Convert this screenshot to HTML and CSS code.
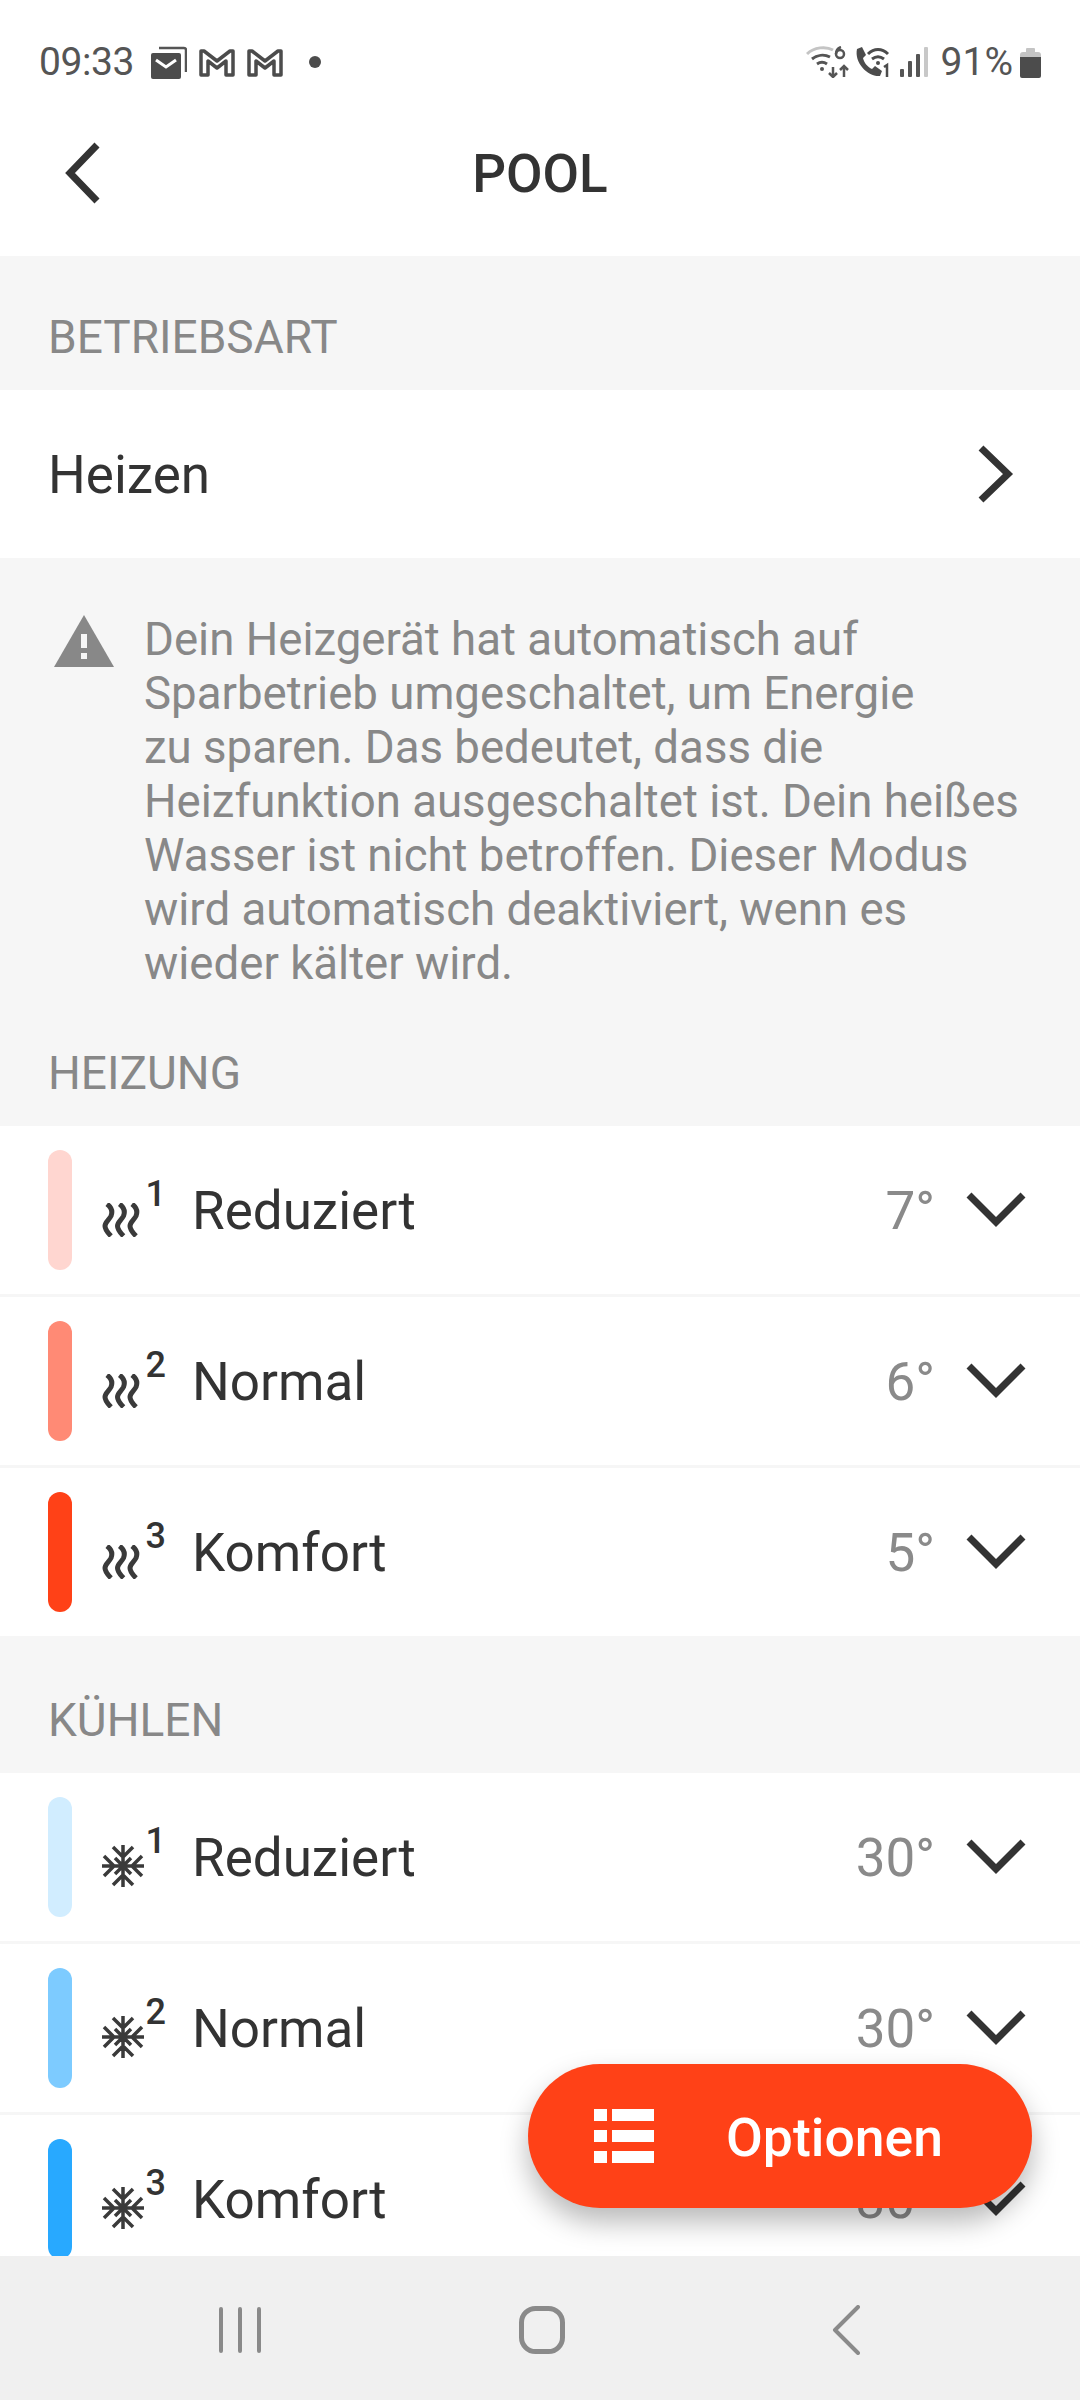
FILE: index.html
```html
<!DOCTYPE html>
<html lang="de">

<head>
    <meta charset="UTF-8">
    <meta name="viewport" content="width=device-width, initial-scale=1.0">
    <title>Pool</title>
    <link rel="stylesheet" href="styles.css">
</head>

<body>
    <div class="app">

        <!-- Statusleiste -->
        <div class="status">
            <div class="status-group">
                <span class="time">09:33</span>
                <svg class="mail-icon" width="36" height="33" viewBox="0 0 36 33">
                    <path d="M8 2h25a2 2 0 0 1 2 2v22" fill="none" stroke="#555" stroke-width="2.5" />
                    <rect x="0" y="7" width="30" height="26" rx="2" fill="#4c4c4c" />
                    <path d="M5 14l10 7 10-7" fill="none" stroke="#fff" stroke-width="3" />
                </svg>
                <svg class="gmail-icon" width="36" height="29" viewBox="0 0 36 29">
                    <path d="M2 27V3h3l13 10L31 3h3v24h-7V13l-9 7-9-7v14z" fill="#fff" stroke="#4c4c4c" stroke-width="3.5" stroke-linejoin="round" />
                </svg>
                <svg class="gmail-icon" width="36" height="29" viewBox="0 0 36 29">
                    <path d="M2 27V3h3l13 10L31 3h3v24h-7V13l-9 7-9-7v14z" fill="#fff" stroke="#4c4c4c" stroke-width="3.5" stroke-linejoin="round" />
                </svg>
                <span class="status-dot"></span>
            </div>
            <div class="status-group">
                <svg width="44" height="32" viewBox="0 0 44 32">
                    <path d="M1 8C8 1 20 0 27 4" fill="none" stroke="#c4c4c4" stroke-width="3" />
                    <path d="M6 13c5-4 12-5 18-2" fill="none" stroke="#555" stroke-width="3" />
                    <path d="M11 18c3-2 7-2 10 0" fill="none" stroke="#555" stroke-width="3" />
                    <circle cx="16" cy="23" r="2" fill="#555" />
                    <path d="M27 21v10m-4-4l4 4 4-4M38 31V20m-4 4l4-4 4 4" fill="none" stroke="#555" stroke-width="2.5" />
                    <circle cx="34" cy="8" r="4" fill="none" stroke="#555" stroke-width="2.5" />
                    <path d="M30 8c0-4 2-6 5-7" fill="none" stroke="#555" stroke-width="2.5" />
                </svg>
                <svg class="call-icon" width="36" height="32" viewBox="0 0 36 32">
                    <path d="M3 3l5-2 4 8-3 3c1 5 5 9 9 11l3-3 7 5-2 5C14 31 0 17 3 3z" fill="#4c4c4c" />
                    <path d="M14 8c6-6 14-6 20 0M18 13c4-3 8-3 12 0" fill="none" stroke="#4c4c4c" stroke-width="3" />
                    <circle cx="24" cy="17" r="2" fill="#4c4c4c" />
                    <path d="M30 21l3-2v12" fill="none" stroke="#4c4c4c" stroke-width="2.5" />
                </svg>
                <svg class="signal-icon" width="28" height="30" viewBox="0 0 28 30">
                    <rect x="0" y="22" width="4" height="8" rx="1" fill="#555" />
                    <rect x="8" y="14" width="4" height="16" rx="1" fill="#555" />
                    <rect x="16" y="7" width="4" height="23" rx="1" fill="#555" />
                    <rect x="24" y="0" width="4" height="30" rx="1" fill="#c8c8c8" />
                </svg>
                <span class="battery-text">91%</span>
                <svg class="battery-icon" width="21" height="32" viewBox="0 0 21 32">
                    <path d="M6 3a1 1 0 0 1 1-1h7a1 1 0 0 1 1 1v3H6z" fill="#c4c4c4" />
                    <path d="M0 9a3 3 0 0 1 3-3h15a3 3 0 0 1 3 3v3H0z" fill="#c4c4c4" />
                    <path d="M0 11h21v19a2 2 0 0 1-2 2H2a2 2 0 0 1-2-2z" fill="#4c4c4c" />
                </svg>
            </div>
        </div>

        <!-- Titel -->
        <header class="topbar">
            <svg class="back-icon" width="36" height="62" viewBox="0 0 36 62">
                <path d="M33 3L6 31l27 28" fill="none" stroke="#333" stroke-width="7" />
            </svg>
            <h1 class="title">POOL</h1>
        </header>

        <main class="content">
            <h2 class="section-label label-first">BETRIEBSART</h2>
            <div class="row">
                <span class="row-label">Heizen</span>
                <svg class="chevron-right" width="36" height="58" viewBox="0 0 36 58">
                    <path d="M3 3l27 26L3 55" fill="none" stroke="#333" stroke-width="7" />
                </svg>
            </div>

            <div class="note">
                <svg class="warn-icon" width="60" height="52" viewBox="0 0 60 52">
                    <path d="M30 0l30 52H0z" fill="#888" />
                    <rect x="27" y="19" width="6" height="14" fill="#f6f6f6" />
                    <rect x="27" y="38" width="6" height="6" fill="#f6f6f6" />
                </svg>
                <p class="note-text">Dein Heizgerät hat automatisch auf<br>Sparbetrieb umgeschaltet, um Energie<br>zu sparen. Das bedeutet, dass die<br>Heizfunktion ausgeschaltet ist. Dein heißes<br>Wasser ist nicht betroffen. Dieser Modus<br>wird automatisch deaktiviert, wenn es<br>wieder kälter wird.</p>
            </div>

            <h2 class="section-label">HEIZUNG</h2>
            <ul class="mode-list">
                <li class="mode">
                    <span class="mode-bar heat-1"></span>
                    <span class="mode-icon">
                        <svg class="heat-icon" width="38" height="34" viewBox="0 0 38 34"><path d="M5 1c4 3 6 7 4 12-2 4-6 6-6 10 0 4 3 7 6 10M17.500 1c4 3 6 7 4 12-2 4-6 6-6 10 0 4 3 7 6 10M30 1c4 3 6 7 4 12-2 4-6 6-6 10 0 4 3 7 6 10" fill="none" stroke="#3a3a3a" stroke-width="5" /></svg>
                        <span class="mode-num">1</span>
                    </span>
                    <span class="row-label">Reduziert</span>
                    <span class="mode-value">7°</span>
                    <svg class="chevron-down" width="60" height="36" viewBox="0 0 60 36"><path d="M3 3l27 27L57 3" fill="none" stroke="#333" stroke-width="7" /></svg>
                </li>
                <li class="mode">
                    <span class="mode-bar heat-2"></span>
                    <span class="mode-icon">
                        <svg class="heat-icon" width="38" height="34" viewBox="0 0 38 34"><path d="M5 1c4 3 6 7 4 12-2 4-6 6-6 10 0 4 3 7 6 10M17.500 1c4 3 6 7 4 12-2 4-6 6-6 10 0 4 3 7 6 10M30 1c4 3 6 7 4 12-2 4-6 6-6 10 0 4 3 7 6 10" fill="none" stroke="#3a3a3a" stroke-width="5" /></svg>
                        <span class="mode-num">2</span>
                    </span>
                    <span class="row-label">Normal</span>
                    <span class="mode-value">6°</span>
                    <svg class="chevron-down" width="60" height="36" viewBox="0 0 60 36"><path d="M3 3l27 27L57 3" fill="none" stroke="#333" stroke-width="7" /></svg>
                </li>
                <li class="mode">
                    <span class="mode-bar heat-3"></span>
                    <span class="mode-icon">
                        <svg class="heat-icon" width="38" height="34" viewBox="0 0 38 34"><path d="M5 1c4 3 6 7 4 12-2 4-6 6-6 10 0 4 3 7 6 10M17.500 1c4 3 6 7 4 12-2 4-6 6-6 10 0 4 3 7 6 10M30 1c4 3 6 7 4 12-2 4-6 6-6 10 0 4 3 7 6 10" fill="none" stroke="#3a3a3a" stroke-width="5" /></svg>
                        <span class="mode-num">3</span>
                    </span>
                    <span class="row-label">Komfort</span>
                    <span class="mode-value">5°</span>
                    <svg class="chevron-down" width="60" height="36" viewBox="0 0 60 36"><path d="M3 3l27 27L57 3" fill="none" stroke="#333" stroke-width="7" /></svg>
                </li>
            </ul>

            <h2 class="section-label">KÜHLEN</h2>
            <ul class="mode-list">
                <li class="mode">
                    <span class="mode-bar cool-1"></span>
                    <span class="mode-icon">
                        <svg width="42" height="42" viewBox="0 0 42 42"><path d="M21 0v42M0 21h42M13 13l16 16M29 13L13 29M11 2l10 10 10-10M11 40l10-10 10 10M2 11l10 10L2 31M40 11L30 21l10 10" fill="none" stroke="#3a3a3a" stroke-width="3.5" /></svg>
                        <span class="mode-num">1</span>
                    </span>
                    <span class="row-label">Reduziert</span>
                    <span class="mode-value">30°</span>
                    <svg class="chevron-down" width="60" height="36" viewBox="0 0 60 36"><path d="M3 3l27 27L57 3" fill="none" stroke="#333" stroke-width="7" /></svg>
                </li>
                <li class="mode">
                    <span class="mode-bar cool-2"></span>
                    <span class="mode-icon">
                        <svg width="42" height="42" viewBox="0 0 42 42"><path d="M21 0v42M0 21h42M13 13l16 16M29 13L13 29M11 2l10 10 10-10M11 40l10-10 10 10M2 11l10 10L2 31M40 11L30 21l10 10" fill="none" stroke="#3a3a3a" stroke-width="3.5" /></svg>
                        <span class="mode-num">2</span>
                    </span>
                    <span class="row-label">Normal</span>
                    <span class="mode-value">30°</span>
                    <svg class="chevron-down" width="60" height="36" viewBox="0 0 60 36"><path d="M3 3l27 27L57 3" fill="none" stroke="#333" stroke-width="7" /></svg>
                </li>
                <li class="mode">
                    <span class="mode-bar cool-3"></span>
                    <span class="mode-icon">
                        <svg width="42" height="42" viewBox="0 0 42 42"><path d="M21 0v42M0 21h42M13 13l16 16M29 13L13 29M11 2l10 10 10-10M11 40l10-10 10 10M2 11l10 10L2 31M40 11L30 21l10 10" fill="none" stroke="#3a3a3a" stroke-width="3.5" /></svg>
                        <span class="mode-num">3</span>
                    </span>
                    <span class="row-label">Komfort</span>
                    <span class="mode-value">30°</span>
                    <svg class="chevron-down" width="60" height="36" viewBox="0 0 60 36"><path d="M3 3l27 27L57 3" fill="none" stroke="#333" stroke-width="7" /></svg>
                </li>
            </ul>
        </main>

        <!-- Optionen-Button -->
        <button class="fab" type="button">
            <svg width="60" height="54" viewBox="0 0 60 54">
                <path d="M0 0h13v12H0zM18 0h42v12H18zM0 21h13v12H0zM18 21h42v12H18zM0 42h13v12H0zM18 42h42v12H18z" fill="#fff" />
            </svg>
            <span class="fab-text">Optionen</span>
        </button>

        <!-- Navigationsleiste -->
        <nav class="navbar">
            <svg width="44" height="46" viewBox="0 0 44 46">
                <path d="M2 2v42M21 2v42M40 2v42" fill="none" stroke="#8a8a8a" stroke-width="4" stroke-linecap="round" />
            </svg>
            <svg class="nav-home" width="46" height="48" viewBox="0 0 46 48">
                <rect x="2.5" y="2.5" width="41" height="43" rx="14" fill="none" stroke="#8a8a8a" stroke-width="5" />
            </svg>
            <svg class="nav-back" width="28" height="50" viewBox="0 0 28 50">
                <path d="M26 2L3 25l23 23" fill="none" stroke="#8a8a8a" stroke-width="4" stroke-linecap="round" stroke-linejoin="round" />
            </svg>
        </nav>
    </div>
</body>

</html>
```

FILE: styles.css
```css
* {
    box-sizing: border-box;
}

body {
    margin: 0;
    background-color: #fff;
    font-family: Roboto, sans-serif;
    color: #333;
}

.app {
    position: relative;
    display: flex;
    flex-direction: column;
    width: 1080px;
    height: 2400px;
    overflow: hidden;
}

/* Statusleiste */
.status {
    display: flex;
    justify-content: space-between;
    align-items: center;
    height: 90px;
    padding: 34px 39px 0 39px;
    color: #555;
}

.status-group {
    display: flex;
    align-items: center;
}

.time {
    font-size: 39px;
    letter-spacing: -0.4px;
    margin-right: 17px;
}

.gmail-icon {
    margin-left: 12px;
}

.status-dot {
    width: 12px;
    height: 12px;
    margin-left: 26px;
    border-radius: 50%;
    background-color: #4c4c4c;
}

.call-icon {
    margin-left: 4px;
}

.signal-icon {
    margin-left: 10px;
}

.battery-text {
    font-size: 39px;
    margin-left: 13px;
}

.battery-icon {
    margin-left: 7px;
}

/* Titel */
.topbar {
    position: relative;
    display: flex;
    justify-content: center;
    align-items: center;
    height: 166px;
    flex-shrink: 0;
}

.back-icon {
    position: absolute;
    left: 64px;
    top: 52px;
}

.title {
    margin: 0;
    padding-top: 2px;
    font-size: 53px;
    font-weight: 500;
}

/* Inhalt */
.content {
    flex: 1;
    min-height: 0;
    overflow: hidden;
    background-color: #f6f6f6;
}

.section-label {
    margin: 0;
    padding: 57px 48px 26px 48px;
    font-size: 46px;
    font-weight: 400;
    line-height: 54px;
    color: #888;
}

.section-label.label-first {
    padding-top: 54px;
}

.row {
    display: flex;
    justify-content: space-between;
    align-items: center;
    height: 168px;
    padding: 0 66px 0 48px;
    background-color: #fff;
}

.row-label {
    padding-top: 2px;
    font-size: 53px;
}

.note {
    display: flex;
    gap: 30px;
    padding: 55px 48px 0 54px;
    margin-bottom: -2px;
}

.warn-icon {
    flex-shrink: 0;
    margin-top: 2px;
}

.note-text {
    margin: 0;
    font-size: 45.6px;
    line-height: 54px;
    color: #888;
}

.mode-list {
    margin: 0;
    padding: 0;
    list-style: none;
}

.mode {
    display: flex;
    align-items: center;
    height: 168px;
    padding: 0 54px 0 48px;
    background-color: #fff;
}

.mode + .mode {
    height: 171px;
    border-top: 3px solid #f6f6f6;
}

.mode-bar {
    width: 24px;
    height: 120px;
    border-radius: 12px;
}

.heat-1 { background-color: #ffd6d0; }
.heat-2 { background-color: #ff8a75; }
.heat-3 { background-color: #ff4117; }
.cool-1 { background-color: #d1edff; }
.cool-2 { background-color: #7dcbff; }
.cool-3 { background-color: #28a9ff; }

.mode-icon {
    display: flex;
    justify-content: space-between;
    align-items: flex-end;
    width: 64px;
    height: 60px;
    margin: 0 26px 0 30px;
}

.heat-icon {
    margin-bottom: 3px;
}

.mode-num {
    align-self: flex-start;
    padding-top: 1px;
    font-size: 36px;
    font-weight: 500;
    line-height: 26px;
}

.mode-value {
    margin-left: auto;
    margin-right: 31px;
    padding-top: 2px;
    font-size: 53px;
    color: #8a8a8a;
}

/* Optionen-Button */
.fab {
    position: absolute;
    right: 48px;
    bottom: 192px;
    display: flex;
    align-items: center;
    gap: 72px;
    width: 504px;
    height: 144px;
    padding: 0 0 0 66px;
    border: none;
    border-radius: 72px;
    background-color: #ff4117;
    box-shadow: 0 14px 28px rgba(0, 0, 0, 0.28);
    color: #fff;
    font-family: Roboto, sans-serif;
    font-size: 53.5px;
    font-weight: 500;
}

.fab-text {
    padding-top: 2px;
}

/* Navigationsleiste */
.navbar {
    display: flex;
    align-items: center;
    height: 144px;
    flex-shrink: 0;
    padding: 3px 0 0 219px;
    background-color: #f0f0f0;
}

.nav-home {
    margin-left: 256px;
}

.nav-back {
    margin-left: 267px;
}
```
